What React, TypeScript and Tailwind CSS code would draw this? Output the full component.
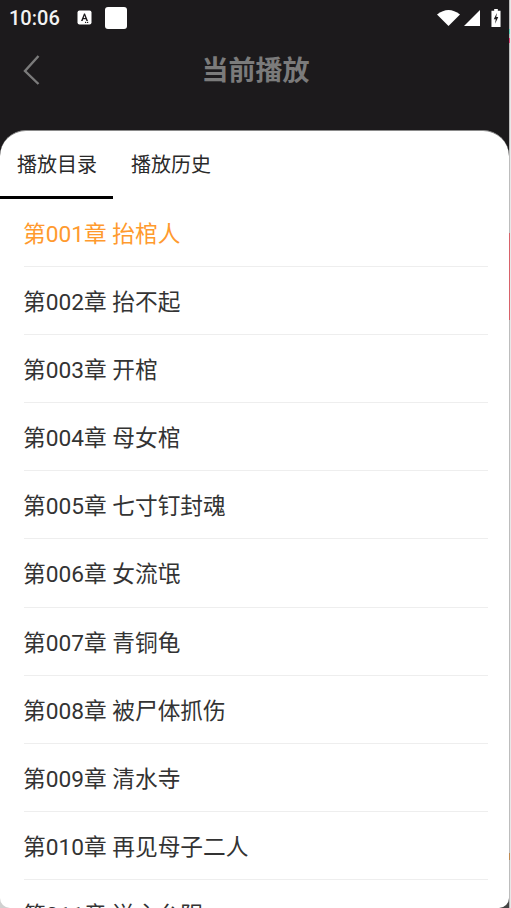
const chapters = [
  "第001章 抬棺人",
  "第002章 抬不起",
  "第003章 开棺",
  "第004章 母女棺",
  "第005章 七寸钉封魂",
  "第006章 女流氓",
  "第007章 青铜龟",
  "第008章 被尸体抓伤",
  "第009章 清水寺",
  "第010章 再见母子二人",
  "第011章 送主台阴",
];

const font = { fontFamily: 'Roboto, "Noto Sans CJK SC", sans-serif' };

export default function App() {
  return (
    <div className="h-[908px] w-[511px] overflow-hidden flex bg-[#e8e8e8]" style={font}>
      <div className="w-[509px] shrink-0 flex flex-col bg-[linear-gradient(#1c1a1c_60%,transparent_60%),linear-gradient(to_right,#d0d0d0_50%,#444_50%)]">
        <div className="h-[35px] shrink-0 flex items-center pl-[9px] pr-[8px] text-white">
          <span className="text-[20px] leading-none font-medium text-[#f2f2f2] w-[66px]">10:06</span>
          <svg width="15" height="15" viewBox="0 0 15 15" className="ml-[2px]">
            <rect x="0.5" y="0.5" width="14" height="14" rx="2" fill="#fff" />
            <path d="M4 11 L7 3.5 H8 L11 11 H9.4 L8.8 9.3 H6.2 L5.6 11Z M6.7 8 H8.3 L7.5 5.6Z" fill="#1c1a1c" />
            <rect x="8" y="11.8" width="1.2" height="1.2" fill="#1c1a1c" />
            <rect x="10" y="11.8" width="1.2" height="1.2" fill="#1c1a1c" />
          </svg>
          <div className="ml-[13px] w-[22px] h-[22px] rounded-[3px] bg-white" />
          <div className="flex-1" />
          <svg width="23" height="17" viewBox="0 0 23 17">
            <path d="M0 5.5 Q11.5 -3.5 23 5.5 L11.5 17Z" fill="#fff" />
          </svg>
          <svg width="16" height="16" viewBox="0 0 16 16" className="ml-[4px]">
            <path d="M16 0 V16 H0Z" fill="#fff" />
          </svg>
          <svg width="10" height="18" viewBox="0 0 11 20" className="ml-[11px]" preserveAspectRatio="none">
            <path d="M3.5 0 H7.5 V2 H10.5 V20 H0.5 V2 H3.5Z" fill="#fff" />
            <path d="M6.5 4.5 L3 11.5 H5.2 L4.5 16.5 L8 9 H5.8Z" fill="#1c1a1c" />
          </svg>
        </div>

        <div className="h-[95px] shrink-0 relative flex items-start justify-center pl-[2px]">
          <svg width="20" height="32" viewBox="0 0 20 32" className="absolute left-[22px] top-[19px]">
            <path d="M16.5 2 L3 17 L16.5 30" fill="none" stroke="#7b7b7b" strokeWidth="2.4" />
          </svg>
          <span className="mt-[18px] text-[27px] leading-[36px] font-bold text-[#7b7b7b]">当前播放</span>
        </div>

        <div className="flex-1 min-h-0 rounded-t-[26px] rounded-b-[10px] bg-white border-t border-[#8a8a8a] overflow-hidden flex flex-col">
          <div className="h-[68px] shrink-0 flex text-[20px] text-[#2a2a2a]">
            <div className="w-[113px] border-b-[3px] border-black flex items-center justify-center pl-[1px] pt-[2px]">播放目录</div>
            <div className="ml-[18px] flex items-center pb-[1px]">播放历史</div>
          </div>
          <div className="pl-[24px] pr-[21px] text-[22.7px] text-[#333]">
            {chapters.map((c, i) => (
              <div
                key={c}
                className={
                  i === 0
                    ? "h-[68.1px] pt-[4px] leading-[63px] border-b border-[#eeeeee] text-[#ff9a2e]"
                    : "h-[68.1px] pt-[4px] leading-[63px] border-b border-[#eeeeee]"
                }
              >
                <span className="-ml-px">{c}</span>
              </div>
            ))}
          </div>
        </div>
      </div>

      <div className="w-[1px] shrink-0 flex flex-col bg-[#bdbdbd]">
        <div className="h-[29px] shrink-0" />
        <div className="h-[5px] shrink-0 bg-[#5fd0b8]" />
        <div className="h-[4px] shrink-0" />
        <div className="h-[5px] shrink-0 bg-[#e8457a]" />
        <div className="h-[190px] shrink-0" />
        <div className="h-[87px] shrink-0 bg-[#d9626a]" />
        <div className="h-[533px] shrink-0" />
        <div className="h-[7px] shrink-0 bg-[#c08a50]" />
      </div>
    </div>
  );
}
